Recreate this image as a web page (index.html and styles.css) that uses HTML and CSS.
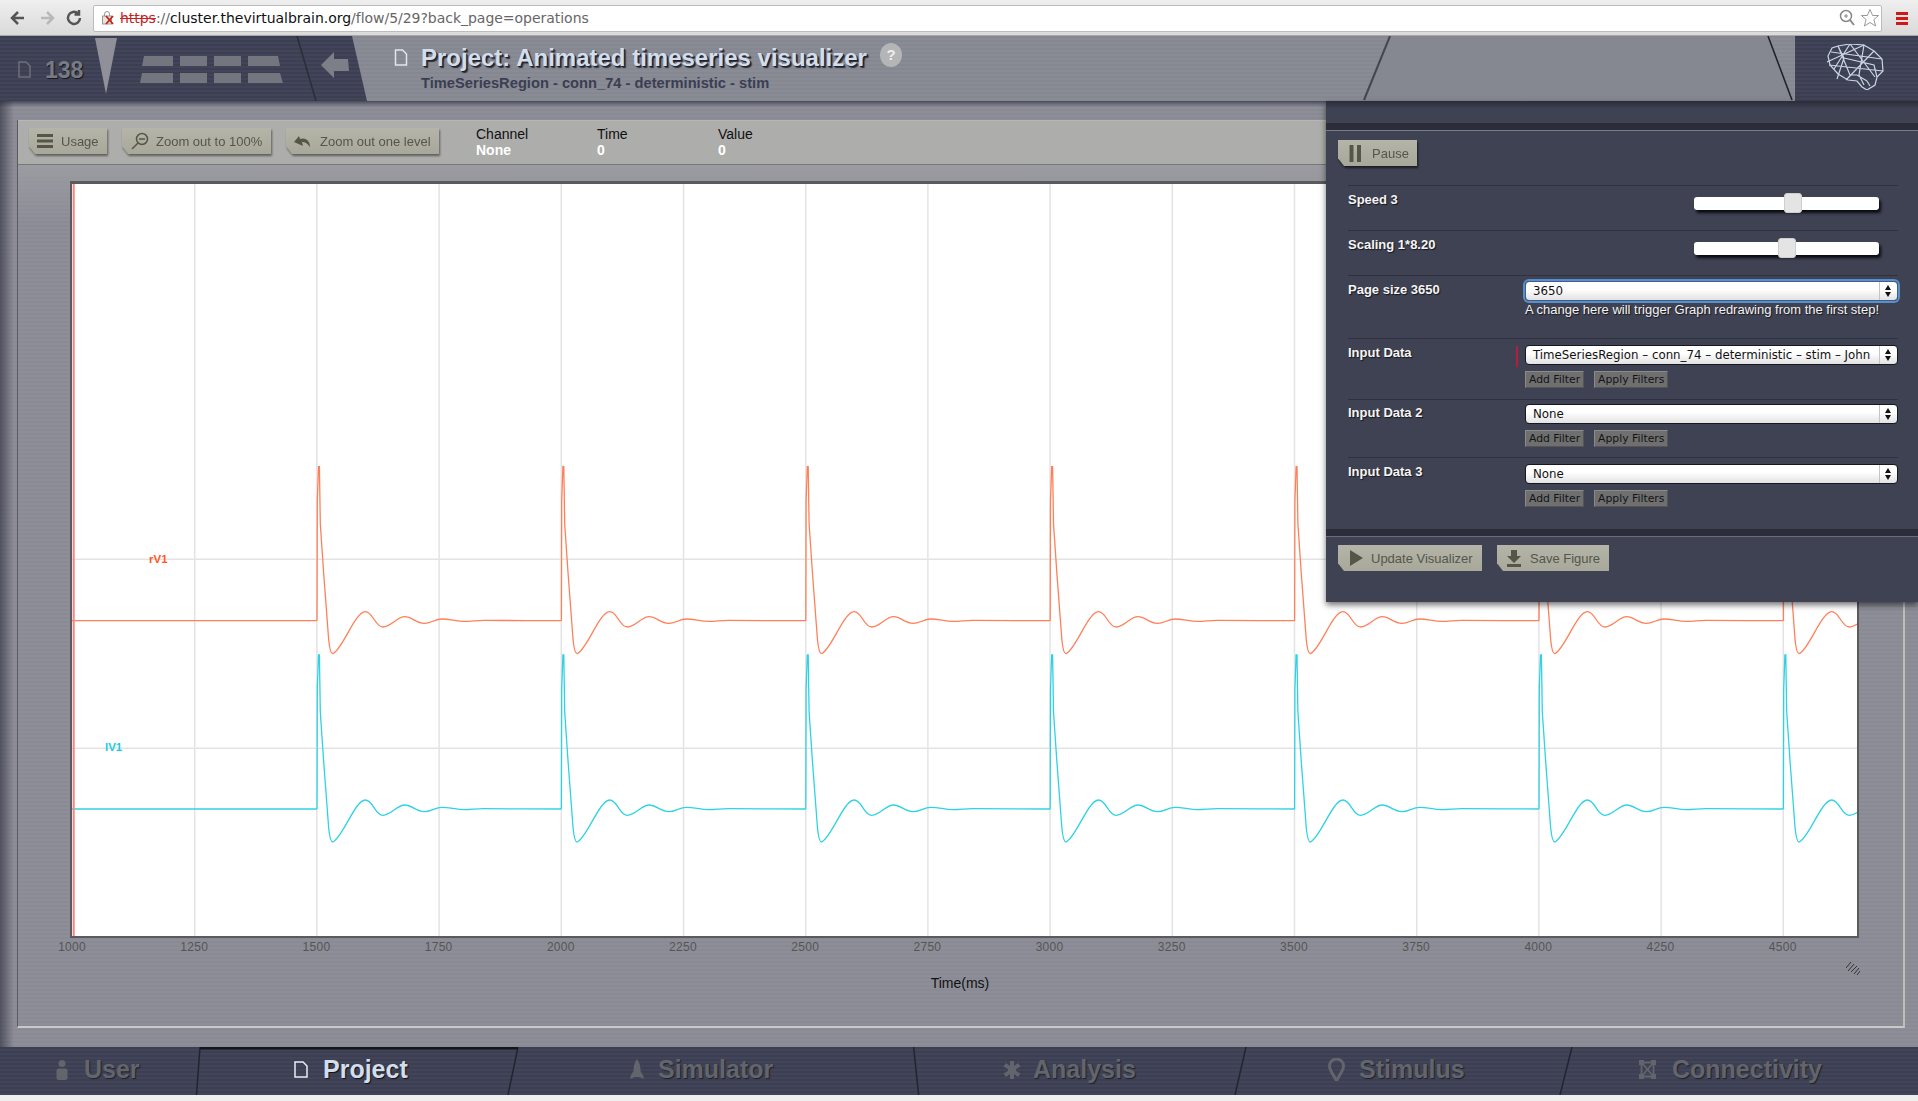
FILE: index.html
```html
<!DOCTYPE html>
<html lang="en">

<head>
    <meta charset="UTF-8">
    <title>Animated timeseries visualizer</title>
    <link rel="stylesheet" href="styles.css">
</head>

<body>
    <!-- browser bar -->
    <div class="browser">
        <svg class="nav-icons" width="80" height="20" viewBox="0 0 80 20">
            <path class="nav-dark" d="M16 10H5M10 4l-6 6 6 6" />
            <path class="nav-light" d="M33 10h11M39 4l6 6-6 6" />
            <path class="nav-dark" d="M78 10a6 6 0 1 1-2-4.6M77 2v4.5h-4.5" transform="translate(-6 0)" />
        </svg>
        <div class="urlbox">
            <svg class="url-lock" width="15" height="16" viewBox="0 0 15 16">
                <rect x="1.5" y="6" width="9" height="8" fill="#e8e4d8" stroke="#999" />
                <path d="M3.5 6V4a2.5 2.5 0 0 1 5 0v2" fill="none" stroke="#999" />
                <path d="M5 6l7 8M12 6l-7 8" stroke="#c8201c" stroke-width="1.8" />
            </svg>
            <span class="url-text"><span class="url-https">https</span><span class="url-grey">://</span>cluster.thevirtualbrain.org<span class="url-grey">/flow/5/29?back_page=operations</span></span>
            <svg class="url-tools" width="42" height="20" viewBox="0 0 42 20">
                <circle cx="7" cy="8" r="5.5" fill="none" stroke="#888" stroke-width="1.5" />
                <path d="M5 8h4M7 6v4" stroke="#888" />
                <path d="M11 12l4 5" stroke="#888" stroke-width="2" />
                <path d="M31 1.5l2.6 6h6l-4.7 4 1.7 6.5-5.600-3.500-5.600 3.500 1.700-6.500-4.700-4h6z" fill="#fff" stroke="#999" />
            </svg>
        </div>
        <div class="menu-bars"><span></span><span></span><span></span></div>
    </div>

    <!-- header -->
    <div class="header">
        <div class="hd-left">
            <svg class="doc-small" width="13" height="17" viewBox="0 0 13 17">
                <path d="M1 1h7l4 4v11H1z" fill="none" stroke="#6c6f7a" stroke-width="1.5" />
            </svg>
            <span class="count">138</span>
            <svg class="wedge" width="22" height="56" viewBox="0 0 22 56">
                <path d="M0 0h22L11 56z" fill="#8f9099" />
            </svg>
            <svg class="blocks" width="146" height="28" viewBox="0 0 146 28">
                <path d="M4 0h29v10H2zM40 0h27v10H40zM74 0h27v10H74zM108 0h30l2 10h-32zM2 17h31v10H0zM40 17h27v10H40zM74 17h27v10H74zM108 17h32l3 10h-35z" fill="#73757f" />
            </svg>
            <svg class="hd-sep" width="22" height="65" viewBox="0 0 22 65">
                <path d="M1 0l19 65" stroke="#2b2d3a" stroke-width="1.5" />
            </svg>
            <svg class="back" width="28" height="26" viewBox="0 0 28 26">
                <path d="M0 13L13 0v7h14l1 12H13v7z" fill="#7d7f88" />
            </svg>
        </div>
        <div class="hd-title">
            <svg class="doc-title" width="14" height="17" viewBox="0 0 14 17">
                <path d="M1.5 1h7l4 4v11h-11z" fill="none" stroke="#dfe6f0" stroke-width="1.5" />
            </svg>
            <div class="title-text">
                <div class="title-line">Project: Animated timeseries visualizer<span class="help">?</span></div>
                <div class="subtitle">TimeSeriesRegion - conn_74 - deterministic - stim</div>
            </div>
        </div>
        <svg class="hd-trap" width="431" height="65" viewBox="0 0 431 65">
            <path d="M27 0h378l24 64H1z" fill="#858791" />
            <path d="M1 64L27 0" stroke="#45464e" stroke-width="2" />
            <path d="M405 0l24 64" stroke="#1f2029" stroke-width="1.5" />
        </svg>
        <div class="hd-logo">
            <svg width="58" height="46" viewBox="0 0 58 46">
                <g fill="none" stroke="#cbd6e4" stroke-width="1.2">
                    <path d="M12 2L24 0l14 1 10 6 8 8 1 12-6 6-2 8-8 5-5-3-5-6-9-1-10-6-8-9-2-9 4-8z" />
                    <path d="M12 2l12 29 7 0 10 6M24 0L8 25M38 1L1 18M24 0l25 33M48 7L20 36M56 15L5 8M57 27L3 21M38 1l-5 30 5 10M18 14l30 7 3 12M12 2l6 12-7 21M44 42l-3-5" />
                </g>
            </svg>
        </div>
    </div>

    <!-- main -->
    <div class="main">
        <div class="panel">
            <div class="toolbar">
                <div class="btn-row">
                    <div class="btn btn-usage">
                        <svg width="16" height="14" viewBox="0 0 16 14"><path d="M0 1.5h16M0 7h16M0 12.5h16" stroke="#565648" stroke-width="3" /></svg>
                        Usage
                    </div>
                    <div class="btn btn-zoom">
                        <svg width="18" height="18" viewBox="0 0 18 18"><circle cx="11" cy="7" r="5.5" fill="none" stroke="#565648" stroke-width="1.5" /><path d="M8 7h6M7 11l-6 6" stroke="#565648" stroke-width="1.5" /></svg>
                        Zoom out to 100%
                    </div>
                    <div class="btn btn-level">
                        <svg width="18" height="14" viewBox="0 0 18 14"><path d="M1 8l5-6 1 3c6-2 10 2 10 8-3-4-5-5-8-5l1 4z" fill="#565648" /></svg>
                        Zoom out one level
                    </div>
                </div>
                <div class="readout">
                    <div class="read-col">Channel<b>None</b></div>
                    <div class="read-col">Time<b>0</b></div>
                    <div class="read-col">Value<b>0</b></div>
                </div>
            </div>

            <div class="plot-area">
                <div class="plot">
                    <svg width="1785" height="752" viewBox="72 184 1785 752">
                        <defs>
                            <path id="pulse" d="M0 0L.3 -120L1.5 -154L2.4 -154L3.3 -97L6.7 -47L11.7 19.3C12.5 27 13.5 33 15.7 33C25 30 38 -9 48.3 -9C56 -9 58 6.3 66 6.3C74 6.3 80 -4 87.7 -4C95 -4 99 2.7 107.3 2.7C114 2.7 118 -1.7 125 -1.7C133 -1.7 139 .7 147.3 .7C154 .7 160 -.3 166.7 -.3C190 -.3 220 0 244.4 0" />
                        </defs>
                        <g class="grid-lines">
                            <path d="M194.7 184V936M316.9 184V936M439.1 184V936M561.3 184V936M683.5 184V936M805.7 184V936M927.9 184V936M1050.1 184V936M1172.3 184V936M1294.5 184V936M1416.7 184V936M1538.9 184V936M1661.1 184V936M1783.3 184V936" />
                            <path d="M72 559.3H1857M72 748.3H1857" />
                        </g>
                        <g class="wave-r">
                            <path d="M72 620.7H317" />
                            <use href="#pulse" x="317" y="620.7" />
                            <use href="#pulse" x="561.4" y="620.7" />
                            <use href="#pulse" x="805.8" y="620.7" />
                            <use href="#pulse" x="1050.2" y="620.7" />
                            <use href="#pulse" x="1294.6" y="620.7" />
                            <use href="#pulse" x="1539" y="620.7" />
                            <use href="#pulse" x="1783.4" y="620.7" />
                        </g>
                        <g class="wave-b">
                            <path d="M72 809H317" />
                            <use href="#pulse" x="317" y="809" />
                            <use href="#pulse" x="561.4" y="809" />
                            <use href="#pulse" x="805.8" y="809" />
                            <use href="#pulse" x="1050.2" y="809" />
                            <use href="#pulse" x="1294.6" y="809" />
                            <use href="#pulse" x="1539" y="809" />
                            <use href="#pulse" x="1783.4" y="809" />
                        </g>
                        <path class="cursor" d="M73.7 184V936" />
                        <text class="lbl-r" x="149" y="563">rV1</text>
                        <text class="lbl-b" x="105" y="751">lV1</text>
                    </svg>
                </div>
                <div class="ticks">
                    <span>1000</span><span>1250</span><span>1500</span><span>1750</span><span>2000</span><span>2250</span><span>2500</span><span>2750</span><span>3000</span><span>3250</span><span>3500</span><span>3750</span><span>4000</span><span>4250</span><span>4500</span>
                </div>
                <div class="axis-title">Time(ms)</div>
                <svg class="resize" width="14" height="13" viewBox="0 0 14 13">
                    <path d="M0 6L5 0M2 9L8 2M5 10L11 4M8 12L13 6M11 13L14 9" stroke="#333" />
                </svg>
            </div>
        </div>

        <!-- floating options -->
        <div class="options">
            <div class="opt-head"></div>
            <div class="opt-pause">
                <div class="btn btn-pause">
                    <svg width="13" height="17" viewBox="0 0 13 17"><path d="M2.5 0v17M10 0v17" stroke="#565648" stroke-width="4" /></svg>
                    Pause
                </div>
            </div>
            <div class="opt-rows">
                <div class="opt-row row-slider">
                    <div class="opt-label">Speed 3</div>
                    <input class="slider" type="range" min="0" max="100" value="54">
                </div>
                <div class="opt-row row-slider">
                    <div class="opt-label">Scaling 1*8.20</div>
                    <input class="slider" type="range" min="0" max="100" value="50">
                </div>
                <div class="opt-row row-page">
                    <div class="opt-label">Page size 3650</div>
                    <div>
                        <div class="select select-focus"><span class="sel-val">3650</span><span class="sel-arrow"></span></div>
                        <div class="opt-hint">A change here will trigger Graph redrawing from the first step!</div>
                    </div>
                </div>
                <div class="opt-row row-input1">
                    <div class="opt-label">Input Data</div>
                    <div>
                        <div class="select select-req"><span class="sel-val">TimeSeriesRegion – conn_74 – deterministic – stim – John</span><span class="sel-arrow"></span></div>
                        <div class="filters"><span class="filter">Add Filter</span><span class="filter">Apply Filters</span></div>
                    </div>
                </div>
                <div class="opt-row row-input2">
                    <div class="opt-label">Input Data 2</div>
                    <div>
                        <div class="select"><span class="sel-val">None</span><span class="sel-arrow"></span></div>
                        <div class="filters"><span class="filter">Add Filter</span><span class="filter">Apply Filters</span></div>
                    </div>
                </div>
                <div class="opt-row row-input3">
                    <div class="opt-label">Input Data 3</div>
                    <div>
                        <div class="select"><span class="sel-val">None</span><span class="sel-arrow"></span></div>
                        <div class="filters"><span class="filter">Add Filter</span><span class="filter">Apply Filters</span></div>
                    </div>
                </div>
            </div>
            <div class="opt-foot">
                <div class="btn btn-update">
                    <svg width="13" height="16" viewBox="0 0 13 16"><path d="M0 0l13 8-13 8z" fill="#565648" /></svg>
                    Update Visualizer
                </div>
                <div class="btn btn-save">
                    <svg width="16" height="17" viewBox="0 0 16 17"><path d="M5 0h6v6h4l-7 7-7-7h4zM1 14h14v3H1z" fill="#565648" /></svg>
                    Save Figure
                </div>
            </div>
        </div>
    </div>

    <!-- bottom tabs -->
    <div class="tabs">
        <div class="tab tab-user">
            <svg width="12" height="20" viewBox="0 0 12 20"><circle cx="6" cy="3.5" r="3.5" fill="#62656c" /><rect x="0.5" y="8.5" width="11" height="11.5" rx="2" fill="#62656c" /></svg>
            User
        </div>
        <div class="tab tab-project tab-active">
            <svg width="14" height="17" viewBox="0 0 14 17"><path d="M1 1h8l4 4v11H1z" fill="none" stroke="#e6edf5" stroke-width="1.5" /></svg>
            Project
        </div>
        <div class="tab tab-simulator">
            <svg width="16" height="22" viewBox="0 0 16 22"><path d="M8 0c3 4 3.5 8 3.5 12l3 5v3l-4-2H5.5l-4 2v-3l3-5C4.5 8 5 4 8 0z" fill="#62656c" /></svg>
            Simulator
        </div>
        <div class="tab tab-analysis">
            <svg width="18" height="18" viewBox="0 0 18 18"><path d="M7 0h4v5l4-3 2.5 3.5L13 8v2l4.5 2.5L15 16l-4-3v5H7v-5l-4 3-2.5-3.5L5 10V8L.5 5.5 3 2l4 3z" fill="#62656c" /></svg>
            Analysis
        </div>
        <div class="tab tab-stimulus">
            <svg width="17" height="23" viewBox="0 0 17 23"><path d="M8.5 23C6 17 1.5 13 1.5 8a7 7 0 0 1 14 0c0 5-4.5 9-7 15z" fill="none" stroke="#62656c" stroke-width="3" /></svg>
            Stimulus
        </div>
        <div class="tab tab-connect">
            <svg width="17" height="19" viewBox="0 0 17 19"><path d="M2.5 2.5h12v14h-12zM2.5 2.5l12 14M14.5 2.5l-12 14" fill="none" stroke="#62656c" stroke-width="1.8" /><path d="M0 0h5v5H0zM12 0h5v5h-5zM0 14h5v5H0zM12 14h5v5h-5z" fill="#62656c" /></svg>
            Connectivity
        </div>
        <svg class="tab-lines" width="1918" height="48" viewBox="0 0 1918 48">
            <path class="tab-edge" d="M200 0L196.5 48M518 0L508 48" />
            <path class="tab-top" d="M200 1H518" />
            <path class="tab-edge" d="M913.6 0L918.6 48M1246 0L1235 48M1572 0L1560 48" />
        </svg>
    </div>
    <div class="status"></div>
</body>

</html>
```

FILE: styles.css
```css
* {
    margin: 0;
    padding: 0;
    box-sizing: border-box;
}

body {
    width: 1918px;
    height: 1101px;
    overflow: hidden;
    display: flex;
    flex-direction: column;
    font-family: "Liberation Sans", Arial, sans-serif;
    background-color: #eee;
}

svg {
    display: block;
    flex: none;
}

/* browser bar */

.browser {
    height: 36px;
    display: flex;
    align-items: center;
    padding: 1px 10px 0 8px;
    background: linear-gradient(#efefef, #dadada);
    border-bottom: 1px solid #a8a8a8;
}

.nav-icons {
    margin-right: 5px;
}

.nav-dark,
.nav-light {
    fill: none;
    stroke-width: 2.5;
}

.nav-dark {
    stroke: #555;
}

.nav-light {
    stroke: #b8b8b8;
}

.urlbox {
    width: 1789px;
    height: 27px;
    display: flex;
    align-items: center;
    padding: 0 0 0 7px;
    background-color: #fff;
    border: 1px solid #bcbcbc;
    border-radius: 2px;
}

.url-lock {
    margin-right: 4px;
}

.url-text {
    flex: 1;
    font-family: "DejaVu Sans", sans-serif;
    font-size: 14px;
    letter-spacing: -0.03px;
    color: #111;
}

.url-https {
    color: #c8201c;
    text-decoration: line-through;
}

.url-grey {
    color: #666;
}

.menu-bars {
    margin-left: 14px;
    width: 12px;
    display: flex;
    flex-direction: column;
    gap: 2px;
}

.menu-bars span {
    height: 3px;
    background-color: #d01818;
}

/* header */

.header {
    height: 65px;
    display: flex;
    background: repeating-linear-gradient(#858791 0 2px, #898b95 2px 4px);
}

.hd-left {
    width: 367px;
    display: flex;
    align-items: flex-start;
    clip-path: polygon(0 0, 352px 0, 367px 100%, 0 100%);
    background: repeating-linear-gradient(#3c3f4f 0 2px, #41445a 2px 4px);
    padding-left: 18px;
}

.doc-small {
    margin-top: 25px;
}

.count {
    margin: 20px 0 0 14px;
    font-size: 23px;
    line-height: 28px;
    font-weight: bold;
    color: #787b84;
    text-shadow: 1px 1px 1px #15161c;
}

.wedge {
    margin: 2px 0 0 12px;
}

.blocks {
    margin: 20px 0 0 23px;
}

.hd-sep {
    margin-left: 10px;
}

.back {
    margin: 16px 0 0 3px;
}

.hd-title {
    width: 996px;
    display: flex;
    padding: 9px 0 0 27px;
}

.doc-title {
    margin: 4px 13px 0 0;
}

.title-line {
    font-size: 24px;
    line-height: 25px;
    font-weight: bold;
    color: #d2deec;
    text-shadow: 1px 1px 0 #20212a, 2px 2px 1px #30313a;
    display: flex;
}

.help {
    width: 22px;
    height: 24px;
    margin: -2px 0 0 13px;
    border-radius: 50%;
    background-color: #b4b5b6;
    color: #eee;
    font-size: 15px;
    line-height: 24px;
    text-align: center;
    text-shadow: none;
}

.subtitle {
    margin-top: 4px;
    font-size: 14.7px;
    line-height: 19px;
    font-weight: bold;
    color: #3b3e52;
}

.hd-logo {
    width: 124px;
    padding: 8px 0 0 31px;
    border-left: 1px solid #8a8c96;
    background: repeating-linear-gradient(#3c3f4f 0 2px, #41445a 2px 4px);
}

/* main */

.main {
    height: 946px;
    position: relative;
    padding: 19px 13px 0 17px;
    background:
        linear-gradient(90deg, rgba(40, 42, 58, .6), rgba(40, 42, 58, 0) 14px),
        linear-gradient(#4a4c5a, rgba(74, 76, 90, 0) 6px),
        repeating-linear-gradient(#898a94 0 2px, #8d8e98 2px 4px);
}

.panel {
    height: 908px;
    border-left: 1px solid #5a5b60;
    border-right: 2px solid #bdbdbb;
    border-bottom: 2px solid #c9c9c5;
}

.toolbar {
    height: 45px;
    display: flex;
    padding: 7px 0 0 11px;
    background-color: #adaeab;
    border-top: 1px solid #b8b8b2;
    border-bottom: 1px solid #77787a;
}

.btn-row {
    display: flex;
    gap: 15px;
    filter: drop-shadow(1px 2px 1px rgba(0, 0, 0, .45));
}

.btn {
    height: 26px;
    display: flex;
    align-items: center;
    gap: 8px;
    padding: 0 8px 0 8px;
    font-size: 13px;
    color: #55564c;
    white-space: nowrap;
    background: linear-gradient(#b4b4a8, #a7a79a);
    clip-path: polygon(0 0, 100% 0, 100% 100%, 6px 100%, 0 70%);
}

.btn-usage {
    width: 78px;
    padding-left: 8px;
    gap: 8px;
}

.btn-zoom {
    width: 149px;
    gap: 7px;
    padding-left: 9px;
}

.btn-level {
    width: 153px;
    gap: 9px;
    padding-left: 7px;
}

.readout {
    display: flex;
    margin: -2px 0 0 37px;
}

.read-col {
    width: 121px;
    font-size: 14px;
    line-height: 16px;
    color: #111;
}

.read-col b {
    display: block;
    color: #fff;
}

.plot-area {
    height: 861px;
    position: relative;
    padding: 16px 0 0 52px;
    background: linear-gradient(#9b9ba1, rgba(155, 155, 161, 0) 60px);
}

.plot {
    width: 1789px;
    height: 757px;
    background-color: #fff;
    border: 2px solid #5b5b5d;
    border-top-width: 3px;
}

.grid-lines {
    fill: none;
    stroke: #e3e3e3;
    stroke-width: 1.5;
}

.wave-r,
.wave-b {
    fill: none;
    stroke-width: 1.3;
}

.wave-r {
    stroke: #ff8058;
}

.wave-b {
    stroke: #2fd2e4;
}

.cursor {
    stroke: #ff8080;
    stroke-width: 2;
}

.lbl-r,
.lbl-b {
    font-size: 11.5px;
    font-weight: bold;
}

.lbl-r {
    fill: #ff5a28;
}

.lbl-b {
    fill: #1ccbe0;
}

.ticks {
    display: flex;
    margin: 1px 0 0 -59px;
}

.ticks span {
    width: 122.2px;
    flex: none;
    text-align: center;
    font-size: 12px;
    line-height: 16px;
    letter-spacing: 0.3px;
    color: #555;
}

.axis-title {
    margin: 20px 0 0 -35px;
    width: 1850px;
    text-align: center;
    font-size: 14px;
    line-height: 16px;
    color: #111;
}

.resize {
    position: absolute;
    left: 1828px;
    top: 797px;
}

/* floating options */

.options {
    position: absolute;
    left: 1326px;
    top: 0;
    width: 592px;
    height: 501px;
    background-color: #3f4252;
    box-shadow: 0 3px 6px rgba(0, 0, 0, .55);
}

.opt-head {
    height: 30px;
    background: linear-gradient(#2a2c3a, #3f4252 8px, #3f4252 22px, #2b2d3b 22px, #2b2d3b 29px, #7b7d86 29px);
}

.opt-pause {
    height: 54px;
    padding: 9px 0 0 12px;
    filter: drop-shadow(1px 2px 1px rgba(0, 0, 0, .6));
}

.btn-pause {
    width: 79px;
    gap: 10px;
    padding-left: 11px;
}

.opt-rows {
    margin: 0 20px 0 22px;
}

.opt-row {
    display: grid;
    grid-template-columns: 177px 1fr;
    border-top: 1px solid #2f3140;
    padding-top: 6px;
}

.row-slider {
    height: 45px;
    padding-top: 5px;
}

.row-page {
    height: 63px;
    padding-top: 5px;
}

.row-input1 {
    height: 61px;
}

.row-input2 {
    height: 58px;
    padding-top: 4px;
}

.row-input3 {
    height: 72px;
}

.opt-label {
    font-size: 13px;
    line-height: 16px;
    font-weight: bold;
    color: #f4f4f4;
    text-shadow: 1px 1px 1px #16171f;
}

.row-slider .opt-label,
.row-input2 .opt-label {
    margin-top: 1px;
}

.row-page .opt-label {
    margin-top: 1px;
}

.slider {
    justify-self: end;
    width: 185px;
    height: 20px;
    margin: 2px 19px 0 0;
    appearance: none;
    background: transparent;
}

.slider::-webkit-slider-runnable-track {
    height: 13px;
    background-color: #fff;
    border-radius: 3px;
    box-shadow: 2px 3px 3px #0b0c12;
}

.slider::-webkit-slider-thumb {
    appearance: none;
    width: 18px;
    height: 20px;
    margin-top: -4px;
    background-color: #e4e4e4;
    border: 1px solid #cfcfcf;
    border-radius: 3px;
}

.select {
    height: 20px;
    display: flex;
    align-items: center;
    position: relative;
    padding-left: 7px;
    background: linear-gradient(#fff, #fff 40%, #e2e2e2);
    border: 1px solid #16171f;
    border-radius: 4px;
}

.select-focus {
    box-shadow: 0 0 0 2px #5a8fc8;
    border-color: #3a5f90;
}

.select-req::before {
    content: "";
    position: absolute;
    left: -10px;
    top: 0;
    width: 2px;
    height: 21px;
    background-color: #b81c3c;
}

.sel-val {
    flex: 1;
    font-family: "DejaVu Sans", sans-serif;
    font-size: 11.8px;
    color: #111;
    white-space: nowrap;
}

/* up and down arrows of the select */

.sel-arrow {
    width: 18px;
    height: 100%;
    position: relative;
    border-left: 1px solid #c4c4c4;
}

.sel-arrow::before,
.sel-arrow::after {
    content: "";
    position: absolute;
    left: 5px;
    border-left: 3.5px solid transparent;
    border-right: 3.5px solid transparent;
}

.sel-arrow::before {
    top: 3px;
    border-bottom: 5px solid #111;
}

.sel-arrow::after {
    bottom: 3px;
    border-top: 5px solid #111;
}

.opt-hint {
    margin-top: 1px;
    font-size: 13px;
    line-height: 16px;
    color: #f2f2f2;
    text-shadow: 1px 1px 1px #16171f;
}

.filters {
    display: flex;
    gap: 10px;
    margin-top: 6px;
}

.filter {
    height: 17px;
    padding: 0 3px;
    font-family: "DejaVu Sans", sans-serif;
    font-size: 10.8px;
    line-height: 15px;
    color: #141414;
    background-color: #6f6f6f;
    border: 1px solid #8a8a8a;
    border-right-color: #555;
    border-bottom-color: #555;
}

.opt-foot {
    height: 73px;
    display: flex;
    gap: 15px;
    padding: 16px 0 0 12px;
    background: linear-gradient(#2b2d3b 7px, #6a6c76 7px, #6a6c76 8px, #3f4252 8px);
}

.btn-update {
    width: 144px;
    gap: 8px;
    padding-left: 12px;
}

.btn-save {
    width: 112px;
    gap: 8px;
    padding-left: 9px;
}

/* bottom tabs */

.tabs {
    height: 48px;
    display: flex;
    position: relative;
    background: repeating-linear-gradient(#3c3f4f 0 2px, #41445a 2px 4px);
}

.tab {
    display: flex;
    align-items: center;
    flex: none;
    padding-bottom: 3px;
    font-size: 25px;
    font-weight: bold;
    color: #62656c;
    text-shadow: 1px 1px 1px #20212a;
}

.tab-active {
    color: #d2deec;
    text-shadow: 1px 1px 1px #111;
}

.tab-user {
    width: 198px;
    padding-left: 56px;
    gap: 16px;
}

.tab-project {
    width: 315px;
    padding-left: 96px;
    gap: 15px;
}

.tab-simulator {
    width: 403px;
    padding-left: 116px;
    gap: 13px;
}

.tab-analysis {
    width: 324px;
    padding-left: 87px;
    gap: 12px;
}

.tab-stimulus {
    width: 326px;
    padding-left: 88px;
    gap: 14px;
}

.tab-connect {
    width: 352px;
    padding-left: 73px;
    gap: 16px;
}

.tab-lines {
    position: absolute;
    left: 0;
    top: 0;
    fill: none;
}

.tab-edge {
    stroke: #23242f;
    stroke-width: 1.5;
}

.tab-top {
    stroke: #15161c;
    stroke-width: 3;
}

.status {
    height: 6px;
    background-color: #efefef;
}
```
